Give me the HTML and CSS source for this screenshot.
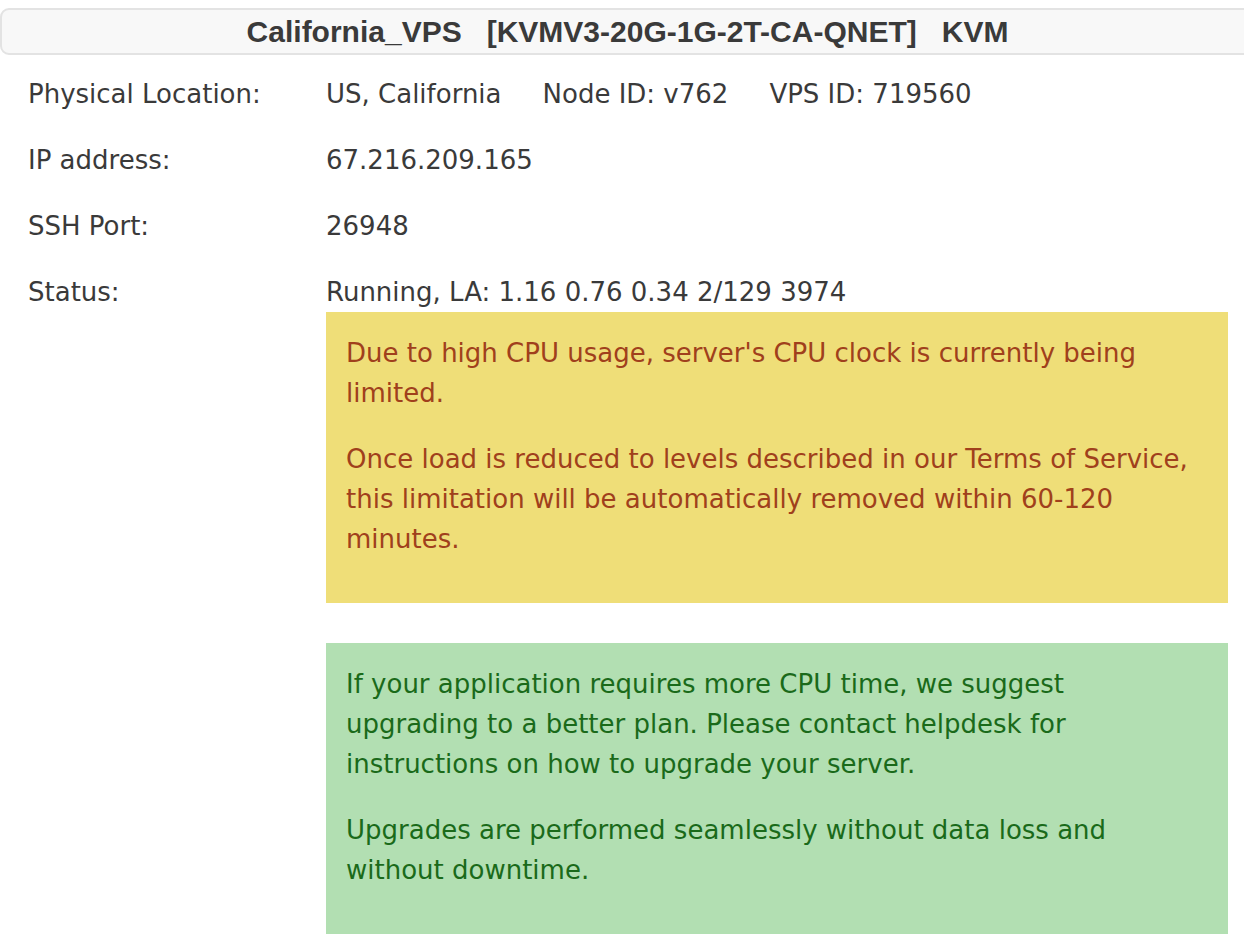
FILE: index.html
```html
<!DOCTYPE html>
<html>
<head>
<meta charset="utf-8">
<link rel="stylesheet" href="styles.css">
</head>
<body>
<div class="header">California_VPS&nbsp;&nbsp;&nbsp;[KVMV3-20G-1G-2T-CA-QNET]&nbsp;&nbsp;&nbsp;KVM</div>
<div class="info">
  <div class="row">
    <div class="label">Physical Location:</div>
    <div class="value">US, California<span class="sp"></span>Node ID: v762<span class="sp"></span>VPS ID: 719560</div>
  </div>
  <div class="row">
    <div class="label">IP address:</div>
    <div class="value">67.216.209.165</div>
  </div>
  <div class="row">
    <div class="label">SSH Port:</div>
    <div class="value">26948</div>
  </div>
  <div class="row last">
    <div class="label">Status:</div>
    <div class="value">
      <div class="status">Running, LA: 1.16 0.76 0.34 2/129 3974</div>
      <div class="notice warn">
        <p>Due to high CPU usage, server's CPU clock is currently being limited.</p>
        <p>Once load is reduced to levels described in our Terms of Service, this limitation will be automatically removed within 60-120 minutes.</p>
      </div>
      <div class="notice ok">
        <p>If your application requires more CPU time, we suggest upgrading to a better plan. Please contact helpdesk for instructions on how to upgrade your server.</p>
        <p>Upgrades are performed seamlessly without data loss and without downtime.</p>
      </div>
    </div>
  </div>
</div>
</body>
</html>
```
FILE: styles.css
```css
html, body {
  margin: 0;
  padding: 0;
  background: #fff;
}
body {
  font-family: "DejaVu Sans", Verdana, sans-serif;
  font-size: 26px;
  color: #3a3a3a;
  overflow: hidden;
}
.header {
  margin-top: 8px;
  width: 1251px;
  height: 43px;
  box-sizing: content-box;
  border: 2px solid #e3e3e3;
  border-radius: 9px;
  background: #f8f8f8;
  font-family: "Liberation Sans", Arial, sans-serif;
  font-weight: bold;
  font-size: 30px;
  line-height: 44px;
  color: #3a3a3a;
  text-align: center;
}
.info {
  display: flex;
  flex-direction: column;
  padding-top: 6px;
}
.row {
  display: flex;
  line-height: 40px;
}
.label {
  width: 298px;
  padding: 13px 0 13px 28px;
  flex-shrink: 0;
}
.value {
  flex: 1;
  padding: 13px 16px 13px 0;
}
.row.last .label { padding-bottom: 0; }
.row.last .value { padding-bottom: 0; }
.sp {
  display: inline-block;
  width: 41px;
}
.notice {
  padding: 21px 30px 18px 20px;
}
.notice p {
  margin: 0 0 26px;
}
.warn {
  background: #efde78;
  color: #a0401c;
  margin-bottom: 40px;
}
.ok {
  background: #b2dfb2;
  color: #1a6a1a;
}
```
